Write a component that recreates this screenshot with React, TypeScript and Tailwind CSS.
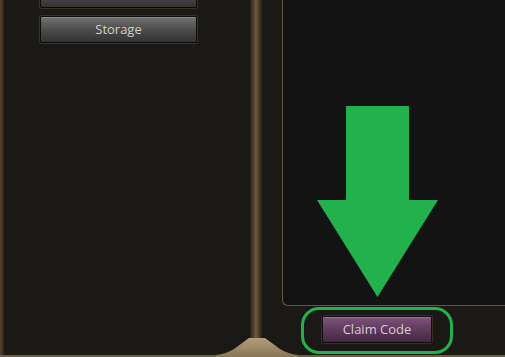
import React from 'react';

const FrameButton = ({ label, purple }: { label: string; purple?: boolean }) => (
  <button
    className={
      purple
        ? 'h-[27px] w-[110px] rounded-[2px] border border-[#140a12] bg-linear-to-b from-[#7f547d] via-[#5f3b5d] to-[#432841] text-[13px] text-[#d8ccd0] shadow-[inset_0_1px_0_#9a6f97,0_0_0_1px_#3a2e22]'
        : 'h-[27px] w-[157px] rounded-[2px] border border-[#0c0b0a] bg-linear-to-b from-[#727272] via-[#4c4c4c] to-[#333333] text-[13px] text-[#d4d0c6] shadow-[inset_0_1px_0_#8a8a8a,0_0_0_1px_#3e3322]'
    }
  >
    {label}
  </button>
);

export default function App() {
  return (
    <div className="relative h-[357px] w-[505px] overflow-hidden bg-[#1b1915] font-['Open_Sans','Liberation_Sans',sans-serif]">
      <div className="flex h-[355px]">
        {/* left frame edge */}
        <div className="w-[4px] bg-linear-to-r from-[#5a4630] to-[#2e2418]" />

        {/* left panel */}
        <div className="w-[246px] bg-[#1b1915] pl-[36px]">
          <div className="-mt-[19px] flex flex-col gap-2">
            <FrameButton label="Pets" />
            <FrameButton label="Storage" />
          </div>
        </div>

        {/* centre divider */}
        <div className="w-[12px] bg-linear-to-r from-[#2a2017] via-[#6e5a40] to-[#2a2017]" />

        {/* right side */}
        <div className="flex flex-1 flex-col pl-[20px]">
          <div className="h-[306px] rounded-bl-[6px] border-b border-l border-[#64553f] bg-[#131313]" />
          <div className="pl-[40px] pt-[10px]">
            <FrameButton label="Claim Code" purple />
          </div>
        </div>
      </div>
      <div className="h-[2px] bg-[#6e5d45]" />

      {/* bottom ornament under the divider */}
      <svg className="absolute left-[216px] top-[337px]" width="82" height="20" viewBox="0 0 82 20">
        <defs>
          <linearGradient id="orn" x1="0" y1="0" x2="0" y2="1">
            <stop offset="0" stopColor="#b39d7b" />
            <stop offset="1" stopColor="#8a7656" />
          </linearGradient>
        </defs>
        <path d="M33 1 L49 1 L64 12 Q72 17 82 18 L82 20 L0 20 L0 18 Q10 17 18 12 Z" fill="url(#orn)" />
      </svg>

      {/* green arrow annotation */}
      <svg className="absolute left-[317px] top-[106px]" width="121" height="192" viewBox="0 0 121 192">
        <path d="M29 0 H92 V94 H121 L60.5 191 L0 94 H29 Z" fill="#22b14c" />
      </svg>

      {/* green oval around the button */}
      <div className="absolute left-[301px] top-[307px] h-[47px] w-[152px] rounded-[18px] border-[3px] border-[#22b14c]" />
    </div>
  );
}
